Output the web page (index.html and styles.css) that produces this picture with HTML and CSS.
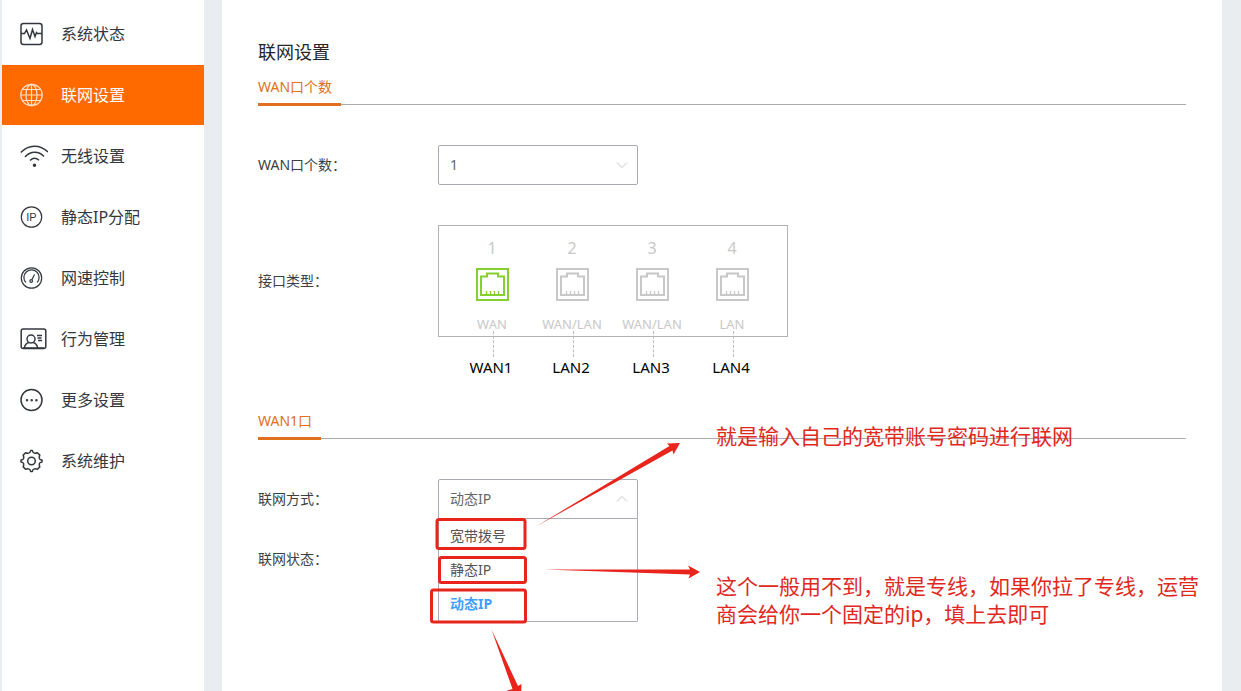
FILE: index.html
```
<!DOCTYPE html>
<html lang="zh-CN">
<head>
<meta charset="utf-8">
<meta name="viewport" content="width=device-width, initial-scale=1">
<title>联网设置</title>
<link rel="stylesheet" href="styles.css">
</head>
<body>

<!-- port icon, shared by the four ports -->
<svg class="defs" aria-hidden="true">
	<symbol id="port" viewBox="0 0 33 33">
		<path fill="none" stroke="currentColor" stroke-width="2" d="M1 1h31v31H1z"/>
		<path fill="none" stroke="currentColor" stroke-width="2" d="M5 27V8.500h6V5.500h11v3H28V27z"/>
		<path fill="none" stroke="currentColor" stroke-width="1.300" d="M10.500 27v-4M14.500 27v-4M18.500 27v-4M22.500 27v-4"/>
	</symbol>
</svg>

<div class="page">

<!-- sidebar -->
<nav class="sidebar">
	<a class="item" href="#">
		<svg class="icon" viewBox="0 0 28 24"><rect x="1" y="1.500" width="21" height="21" rx="2.500"/><path d="M1 11.500h3.500l2-3.500 3.500 8.500 2.500-9 2.500 7 1.500-4 1 1H22"/></svg>
		系统状态
	</a>
	<a class="item active" href="#">
		<svg class="icon thin" viewBox="0 0 28 24"><circle cx="11.500" cy="12" r="10.700"/><ellipse cx="11.500" cy="12" rx="5.500" ry="10.700"/><path d="M11.500 1.300v21.400M1 12h21M2.500 6.500h18M2.500 17.500h18"/></svg>
		联网设置
	</a>
	<a class="item" href="#">
		<svg class="icon" viewBox="0 0 28 24"><path d="M.8 8.500C8.500.3 20-.1 28 8M5 13c5.500-6 13.500-6.300 19-.5M10 16.500c2.800-2.700 6.200-2.800 9-.2"/><circle class="fill" cx="14.500" cy="21.300" r="1"/></svg>
		无线设置
	</a>
	<a class="item" href="#">
		<svg class="icon thin" viewBox="0 0 28 24"><circle cx="11.500" cy="12" r="10.200"/><text x="11.500" y="16" text-anchor="middle">IP</text></svg>
		静态IP分配
	</a>
	<a class="item" href="#">
		<svg class="icon thin" viewBox="0 0 28 24"><circle cx="11.500" cy="12" r="10.200"/><path d="M5.800 16.500A7.600 7.600 0 1 1 17.200 16.500M14.500 8.500l-2.500 5"/><circle cx="11.200" cy="15" r="1.300"/></svg>
		网速控制
	</a>
	<a class="item" href="#">
		<svg class="icon" viewBox="0 0 28 24"><rect x="1.200" y="2" width="24.600" height="19.500" rx="2"/><circle cx="11" cy="12" r="4"/><path d="M4.500 20.500c.5-3 2.500-4.500 4.500-5M13 15.500c2 .5 4 2 4.500 5M17 8.500h5M17.500 11h4M18 13.500h4M3 21h21"/></svg>
		行为管理
	</a>
	<a class="item" href="#">
		<svg class="icon" viewBox="0 0 28 24"><circle cx="11.500" cy="12" r="10.500"/><circle class="fill" cx="7" cy="12.300" r=".5"/><circle class="fill" cx="11.700" cy="12.300" r=".5"/><circle class="fill" cx="16.400" cy="12.300" r=".5"/></svg>
		更多设置
	</a>
	<a class="item" href="#">
		<svg class="icon" viewBox="0 0 28 24"><path stroke-linejoin="round" d="M9.200 3.900Q10.300 3.500 10.600 1.500H12.400Q12.700 3.500 13.800 3.900Q15.500 4.600 17.400 3.700L19.800 6.100Q18.900 8 19.500 9.700Q20 10.800 22 11.100V12.900Q20 13.200 19.500 14.300Q18.900 16 19.800 17.900L17.400 20.300Q15.500 19.400 13.800 20.100Q12.700 20.500 12.400 22.500H10.600Q10.300 20.500 9.200 20.100Q7.500 19.400 5.600 20.300L3.200 17.900Q4.100 16 3.500 14.300Q3 13.200 1 12.900V11.100Q3 10.800 3.500 9.700Q4.100 8 3.200 6.100L5.600 3.700Q7.500 4.600 9.200 3.900Z"/><circle cx="11.500" cy="12" r="3.800"/></svg>
		系统维护
	</a>
</nav>

<!-- content -->
<main class="content">
	<h1 class="title">联网设置</h1>

	<div class="section"><h2 class="tab">WAN口个数</h2></div>

	<div class="row">
		<label class="label" for="wan-count">WAN口个数：</label>
		<div class="field">
			<select class="select" id="wan-count"><option>1</option><option>2</option></select>
			<svg class="arrow" viewBox="0 0 12 8"><path d="M1 1.500l5 5 5-5"/></svg>
		</div>
	</div>

	<div class="row row-ports">
		<div class="label">接口类型：</div>
		<div class="ports">
			<div class="port on"><span class="num">1</span><svg class="jack"><use href="#port"/></svg><span class="type">WAN</span></div>
			<div class="port"><span class="num">2</span><svg class="jack"><use href="#port"/></svg><span class="type">WAN/LAN</span></div>
			<div class="port"><span class="num">3</span><svg class="jack"><use href="#port"/></svg><span class="type">WAN/LAN</span></div>
			<div class="port"><span class="num">4</span><svg class="jack"><use href="#port"/></svg><span class="type">LAN</span></div>
		</div>
	</div>
	<div class="port-names">
		<span class="name">WAN1</span>
		<span class="name">LAN2</span>
		<span class="name">LAN3</span>
		<span class="name">LAN4</span>
	</div>

	<div class="section"><h2 class="tab">WAN1口</h2></div>

	<div class="row row-mode">
		<label class="label" for="mode">联网方式：</label>
		<div class="field">
			<select class="select open" id="mode"><option>动态IP</option><option>静态IP</option><option>宽带拨号</option></select>
			<svg class="arrow" viewBox="0 0 12 8"><path d="M1 6.500l5-5 5 5"/></svg>
			<div class="menu">
				<button class="option" type="button">宽带拨号</button>
				<button class="option" type="button">静态IP</button>
				<button class="option selected" type="button">动态IP</button>
			</div>
		</div>
	</div>

	<div class="row">
		<div class="label">联网状态：</div>
	</div>

	<!-- red notes over the form -->
	<svg class="marks" viewBox="0 0 290 271" aria-hidden="true">
		<g class="box">
			<rect x="17" y="89.500" width="88" height="29" rx="2"/>
			<rect x="19.500" y="127.500" width="86" height="25" rx="2"/>
			<rect x="11.500" y="160" width="94" height="32" rx="2"/>
		</g>
		<path d="M116 96.500 249.500 16 247 13.500 260 13 253.500 24.500 252.500 20.500Z"/>
		<path d="M124 139.500 270 139.500 268 135.500 280 142 268.500 148.500 270 144.500Z"/>
		<path d="M71.500 199.500 98 256 101.500 254 101 271 87 260.500 92.500 259Z"/>
	</svg>
	<p class="note note-dial">就是输入自己的宽带账号密码进行联网</p>
	<p class="note note-static">这个一般用不到，就是专线，如果你拉了专线，运营商会给你一个固定的ip，填上去即可</p>
</main>

</div>
</body>
</html>
```

FILE: styles.css
```
* {
	box-sizing: border-box;
}
body {
	margin: 0;
	background-color: #e9edf0;
	color: #3c3f44;
	font-family: "Noto Sans", "Noto Sans CJK SC", sans-serif;
	font-size: 14px;
	line-height: 20px;
}
.defs {
	display: none;
}
.page {
	display: flex;
	gap: 18px;
	height: 100vh;
	padding: 0 19px 0 2px;
	overflow: hidden;
}

/* sidebar */
.sidebar {
	display: flex;
	flex-direction: column;
	flex: none;
	gap: 1px;
	width: 202px;
	padding-top: 4px;
	background-color: #fff;
}
.item {
	display: flex;
	align-items: center;
	gap: 13px;
	height: 60px;
	padding-left: 18px;
	color: #33373d;
	font-size: 16px;
	text-decoration: none;
}
.item.active {
	background-color: #ff6a00;
	color: #fff;
}
.icon {
	width: 28px;
	height: 24px;
	fill: none;
	stroke: currentColor;
	stroke-width: 1.5;
}
.icon.thin {
	stroke-width: 1.2;
}
.item.active .icon {
	color: #ffe0c8;
}
.icon .fill {
	fill: currentColor;
}
.icon text {
	fill: currentColor;
	stroke: none;
	font-family: "Liberation Sans", sans-serif;
	font-size: 11px;
}

/* content */
.content {
	position: relative;
	flex: 1;
	padding: 38px 36px 0;
	background-color: #fff;
}
.title {
	margin: 0 0 11px;
	color: #23262b;
	font-size: 18px;
	font-weight: normal;
	line-height: 28px;
}
.section {
	display: flex;
	margin-bottom: 40px;
	border-bottom: 1px solid #a9abae;
}
.tab {
	margin: 0 0 -2px;
	padding: 0 9px 6px 0;
	border-bottom: 3px solid #e07020;
	color: #e07020;
	font-size: 14px;
	font-weight: normal;
}
.row {
	display: flex;
	align-items: center;
	min-height: 40px;
	margin-bottom: 40px;
}
.row-ports {
	margin-bottom: 20px;
}
.row-mode {
	margin-bottom: 20px;
}
.label {
	flex: none;
	width: 180px;
}

/* drop-downs */
.field {
	position: relative;
	width: 200px;
}
.select {
	display: block;
	width: 100%;
	height: 40px;
	padding: 0 11px;
	border: 1px solid #a9abb2;
	border-radius: 2px;
	appearance: none;
	background-color: #fff;
	color: #666;
	font: inherit;
}
.select.open {
	border-radius: 2px 2px 0 0;
}
.arrow {
	position: absolute;
	top: 16px;
	right: 10px;
	width: 12px;
	height: 8px;
	fill: none;
	stroke: #c8cacd;
	pointer-events: none;
}
.menu {
	position: absolute;
	top: 100%;
	left: 0;
	width: 100%;
	border: 1px solid #a9abb2;
	border-top: 0;
	border-radius: 0 0 2px 2px;
	background-color: #fff;
}
.option {
	display: block;
	width: 100%;
	height: 34px;
	padding: 0 11px;
	border: 0;
	background: none;
	color: #555;
	font: inherit;
	text-align: left;
}
.option.selected {
	color: #409eff;
	font-weight: bold;
}

/* ports */
.ports {
	display: flex;
	width: 350px;
	height: 112px;
	padding: 12px 14px 0 13px;
	border: 1px solid #b0b2b4;
}
.port {
	display: flex;
	flex-direction: column;
	align-items: center;
	width: 80px;
	color: #c8c8c8;
}
.num {
	font-size: 16px;
}
.jack {
	width: 33px;
	height: 33px;
	margin: 10px 0 13px;
}
.port.on .jack {
	color: #85d02e;
}
.type {
	font-size: 13px;
}
.port-names {
	display: flex;
	margin: 0 0 34px 193px;
}
.name {
	position: relative;
	width: 80px;
	color: #000;
	font-size: 15px;
	text-align: center;
}
.name::before {
	content: "";
	position: absolute;
	left: 50%;
	bottom: 100%;
	height: 26px;
	margin-left: 2px;
	border-left: 1px dashed #bbb;
}

/* notes */
.marks {
	position: absolute;
	top: 430px;
	left: 198px;
	width: 290px;
	height: 271px;
	fill: #e8241c;
	pointer-events: none;
}
.box {
	fill: none;
	stroke: #e8241c;
	stroke-width: 3;
}
.note {
	position: absolute;
	margin: 0;
	color: #e0281e;
	font-size: 21px;
	line-height: 28px;
}
.note-dial {
	top: 422px;
	left: 494px;
	white-space: nowrap;
}
.note-static {
	top: 572px;
	left: 494px;
	width: 490px;
}
```
